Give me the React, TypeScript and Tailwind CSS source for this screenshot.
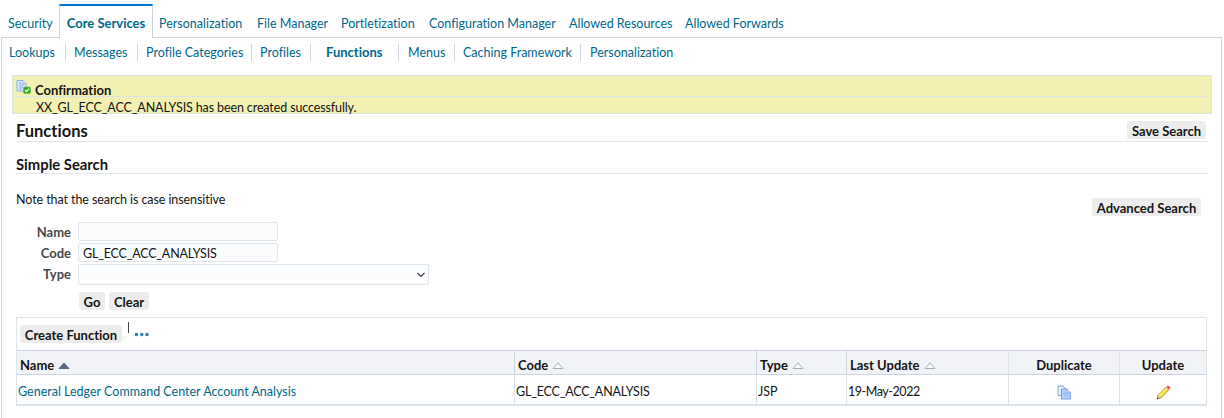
import type { ReactNode } from "react";

const tabs = [
  { label: "Personalization", box: "w-[98px]" },
  { label: "File Manager", box: "w-[84px]" },
  { label: "Portletization", box: "w-[88px]" },
  { label: "Configuration Manager", box: "w-[140px]" },
  { label: "Allowed Resources", box: "w-[116px]" },
  { label: "Allowed Forwards", box: "w-[110px]" },
];

const subTabs = [
  { label: "Lookups", box: "w-[57px]", pad: "pl-0" },
  { label: "Messages", box: "w-[72px]", pad: "pl-2" },
  { label: "Profile Categories", box: "w-[114px]", pad: "pl-2" },
  { label: "Profiles", box: "w-[59px]", pad: "pl-2" },
  { label: "Functions", box: "w-[88px]", pad: "pl-[15px]", active: true },
  { label: "Menus", box: "w-[56px]", pad: "pl-[9px]" },
  { label: "Caching Framework", box: "w-[126px]", pad: "pl-2" },
  { label: "Personalization", box: "w-[100px]", pad: "pl-[9px]", last: true },
];

function Button({ children, className }: { children: ReactNode; className: string }) {
  return (
    <button
      className={`h-[18px] shrink-0 rounded-[3px] bg-[#ececec] text-center text-[13px] leading-[20px] font-bold whitespace-nowrap text-[#161513] ${className}`}
    >
      {children}
    </button>
  );
}

function SortIcon({ filled = false }: { filled?: boolean }) {
  return (
    <svg width="12" height="8" viewBox="0 0 12 8" className="mt-px">
      <path
        d="M6 1L11 6.5H1Z"
        fill={filled ? "#5b6b7d" : "#fafbfc"}
        stroke={filled ? "#5b6b7d" : "#a3afb9"}
        strokeWidth="1"
      />
    </svg>
  );
}

function ConfirmIcon() {
  return (
    <svg width="16" height="16" viewBox="0 0 16 16" className="shrink-0">
      <path d="M1 1.5H7L10 4.5V12H1Z" fill="#dce8fb" stroke="#8eadea" />
      <path d="M7 1.5V4.5H10" fill="#f4f8ff" stroke="#8eadea" strokeWidth=".8" />
      <path d="M3 4H5.5M3 6H8M3 8H7M3 10H6" stroke="#86a8ea" strokeWidth=".9" />
      <rect x="7.5" y="8" width="7" height="6.5" rx="1.2" fill="#37ac20" stroke="#68bd4c" strokeWidth=".7" />
      <path d="M9 11L10.5 12.7L13 9.6" fill="none" stroke="#fff" strokeWidth="1.1" />
    </svg>
  );
}

function DuplicateIcon() {
  return (
    <svg width="15" height="15" viewBox="0 0 15 15">
      <path d="M1 1H6L9 4V10.5H1Z" fill="#e3edfd" stroke="#86a9e8" />
      <path d="M4.5 4H10L13.3 7.2V14H4.5Z" fill="#bed4fa" stroke="#7199e6" />
      <path d="M10 4V7.2H13.3" fill="#f1f6ff" stroke="#7199e6" strokeWidth=".8" />
      <path d="M6.5 7H8.5M6.5 9H11.5M6.5 11H11.5" stroke="#8cafee" strokeWidth=".9" />
    </svg>
  );
}

function PencilIcon() {
  return (
    <svg width="15" height="15" viewBox="0 0 15 15">
      <path d="M2 10.2L10 2.2L12.8 5L4.8 13L1.2 14Z" fill="#f5df35" stroke="#8f7d2b" strokeWidth=".7" />
      <path d="M3.5 10.5L10.7 3.3" stroke="#fff490" strokeWidth="1.2" />
      <path d="M10 2.2L11.5 .8Q12.3 .4 13 1L14 2Q14.5 2.8 14 3.7L12.8 5Z" fill="#ee5645" />
      <path d="M9.7 2.5L10.3 1.9L13.1 4.7L12.5 5.3Z" fill="#c9d1ce" />
      <path d="M2 10.2L4.8 13L1.2 14Z" fill="#d9bd8b" />
      <path d="M1.5 12.3L2.8 13.5L1 14Z" fill="#34322b" />
    </svg>
  );
}

function Header({ children, className = "" }: { children: ReactNode; className?: string }) {
  return (
    <th className={`border-b border-[#ccd5df] bg-[#f1f3f7] p-0 pt-[5px] text-left text-[13px] font-bold ${className}`}>
      <div className="flex items-center gap-[4px] pl-[3px]">{children}</div>
    </th>
  );
}

export default function App() {
  return (
    <div className="h-[418px] w-[1224px] overflow-hidden bg-white pt-1 pl-px font-['Lato','Noto_Sans',sans-serif] text-[12.5px] leading-[18px] whitespace-nowrap text-[#161513] [font-variant-ligatures:none]">
      <nav className="relative z-10 flex h-[34px] text-[#00688c]">
        <a className="w-[58px] pt-[11px] pl-[7px]">Security</a>
        <a className="h-[34px] w-[94px] border-x border-t-2 border-x-[#ccd5df] border-t-[#0572ce] bg-white pt-[8px] text-center text-[13px] font-bold">
          Core Services
        </a>
        <div className="flex pt-[11px] pl-[6px]">
          {tabs.map((t) => (
            <a key={t.label} className={t.box}>{t.label}</a>
          ))}
        </div>
      </nav>

      <main className="-mt-px h-[390px] w-[1221px] border border-[#ccd5df]">
        <nav className="flex h-[37px] pt-[6px] pl-[7px] text-[#00688c]">
          {subTabs.map((t) => (
            <a
              key={t.label}
              className={`h-[17px] ${t.box} ${t.pad} ${t.active ? "text-[13px] leading-[16px] font-bold" : ""} ${t.last ? "" : "border-r border-[#ccd5df]"}`}
            >
              {t.label}
            </a>
          ))}
        </nav>

        <section className="ml-[10px] h-[39px] w-[1200px] border border-[#dce4e6] bg-[#f3f0b4] pr-1 pl-[3px]">
          <div className="flex h-[21px] border-b border-[#dce4e6] pt-[3px]">
            <ConfirmIcon />
            <h2 className="pt-[2px] pl-[3px] text-[13px] font-bold">Confirmation</h2>
          </div>
          <p className="pt-[2px] pl-[20px] tracking-[-0.12px]">XX_GL_ECC_ACC_ANALYSIS has been created successfully.</p>
        </section>

        <section className="ml-[14px] w-[1192px]">
          <div className="flex h-[28px] justify-between border-b border-[#dfe6ed] pt-[7px] pr-[2px]">
            <h1 className="pt-px text-[16.5px] leading-[19px] font-bold">Functions</h1>
            <Button className="w-[79px]">Save Search</Button>
          </div>
          <div className="h-8 border-b border-[#dfe6ed] pt-[13px]">
            <h2 className="text-[14.8px] leading-[18px] font-bold">Simple Search</h2>
          </div>
          <div className="flex h-[48px] justify-between pt-[17px] pr-[7px]">
            <p className="tracking-[-0.08px]">Note that the search is case insensitive</p>
            <Button className="mt-[7px] w-[109px]">Advanced Search</Button>
          </div>

          <form className="h-[95px]">
            <div className="flex h-[21px]">
              <label className="w-[55px] pt-px text-right text-[13px] font-bold text-[#4a4846]">Name</label>
              <input className="ml-[7px] h-[19px] w-[200px] rounded-[2px] border border-[#dfe5eb] bg-[#fbfcfd] px-1" />
            </div>
            <div className="flex h-[21px]">
              <label className="w-[55px] pt-px text-right text-[13px] font-bold text-[#4a4846]">Code</label>
              <input
                readOnly
                value="GL_ECC_ACC_ANALYSIS"
                className="ml-[7px] h-[19px] w-[200px] rounded-[2px] border border-[#dfe5eb] bg-[#fbfcfd] px-1 pt-px tracking-[-0.2px]"
              />
            </div>
            <div className="flex h-[28px]">
              <label className="w-[55px] pt-px text-right text-[13px] font-bold text-[#4a4846]">Type</label>
              <div className="ml-[7px] flex h-[21px] w-[351px] items-center justify-end rounded-[2px] border border-[#dfe5eb] bg-[#fbfcfd] pr-[3px]">
                <svg width="8" height="6" viewBox="0 0 8 6">
                  <path d="M.5 1L4 4.5L7.5 1" fill="none" stroke="#333" strokeWidth="1.1" />
                </svg>
              </div>
            </div>
            <div className="flex gap-1 pl-[63px]">
              <Button className="w-[26px]">Go</Button>
              <Button className="w-[40px]">Clear</Button>
            </div>
          </form>

          <div className="h-[89px] w-[1191px] border border-b-2 border-[#dbe3ec]">
            <div className="flex h-[32px] pt-[7px] pl-[3px]">
              <Button className="w-[102px]">Create Function</Button>
              <div className="-mt-[3px] ml-[6px] h-[11px] w-px bg-[#4a4a4a]" />
              <svg width="16" height="5" viewBox="0 0 16 5" className="mt-[7px] ml-[5px]">
                <circle cx="2.5" cy="2.5" r="1.8" fill="#347fbc" />
                <circle cx="7.8" cy="2.5" r="1.8" fill="#347fbc" />
                <circle cx="13" cy="2.5" r="1.8" fill="#347fbc" />
              </svg>
            </div>
            <table className="w-[1189px] table-fixed border-separate border-spacing-0 border-t border-[#ccd5df]">
              <colgroup>
                <col className="w-[497px]" />
                <col className="w-[242px]" />
                <col className="w-[90px]" />
                <col className="w-[162px]" />
                <col className="w-[111px]" />
                <col className="w-[87px]" />
              </colgroup>
              <thead>
                <tr className="h-6">
                  <Header>Name <SortIcon filled /></Header>
                  <Header className="border-l border-l-[#ccd5df]">Code <SortIcon /></Header>
                  <Header className="border-l border-l-[#ccd5df]">Type <SortIcon /></Header>
                  <Header className="border-l border-l-[#ccd5df]">Last Update <SortIcon /></Header>
                  <Header className="border-l border-l-[#dbe3ec]"><span className="w-full pr-[3px] text-center">Duplicate</span></Header>
                  <Header className="border-l border-l-[#dbe3ec]"><span className="w-full pr-[3px] text-center">Update</span></Header>
                </tr>
              </thead>
              <tbody>
                <tr className="h-[30px]">
                  <td className="p-0 pt-[3px] pl-px text-[#00688c]">General Ledger Command Center Account Analysis</td>
                  <td className="border-l border-[#dbe3ec] p-0 pt-[3px] pl-px tracking-[-0.2px]">GL_ECC_ACC_ANALYSIS</td>
                  <td className="border-l border-[#dbe3ec] p-0 pt-[3px] pl-px">JSP</td>
                  <td className="border-l border-[#dbe3ec] p-0 pt-[3px] pl-px tracking-[-0.45px]">19-May-2022</td>
                  <td className="border-l border-[#dbe3ec] p-0 pt-[4px]"><div className="flex justify-center"><DuplicateIcon /></div></td>
                  <td className="border-l border-[#dbe3ec] p-0 pt-[4px]"><div className="flex justify-center"><PencilIcon /></div></td>
                </tr>
              </tbody>
            </table>
          </div>
        </section>
      </main>
    </div>
  );
}
